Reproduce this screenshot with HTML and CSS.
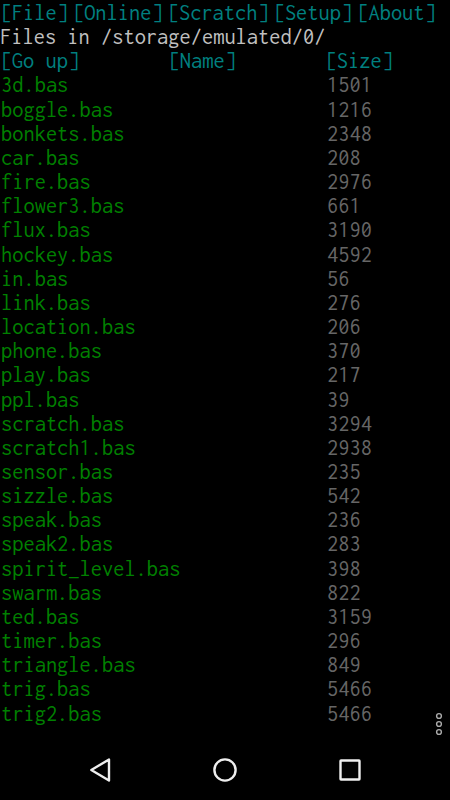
FILE: index.html
```
<!DOCTYPE html>
<html>
  <head>
    <meta charset="utf-8" />
    <title>Files</title>
    <link rel="stylesheet" href="styles.css">
  </head>
  <body>
    <div class="console">
      <div class="menu">
        <a>[File]</a>
        <a>[Online]</a>
        <a>[Scratch]</a>
        <a>[Setup]</a>
        <a>[About]</a>
      </div>
      <p class="path">Files in /storage/emulated/0/</p>
      <div class="header">
        <a>[Go up]</a>
        <a>[Name]</a>
        <a>[Size]</a>
      </div>
      <div class="files" id="files"></div>
    </div>

    <svg class="more" width="10" height="26" viewBox="0 0 10 26">
      <circle cx="5" cy="5" r="2.4" />
      <circle cx="5" cy="13" r="2.4" />
      <circle cx="5" cy="21" r="2.4" />
    </svg>

    <div class="navbar">
      <svg width="32" height="32" viewBox="0 0 32 32">
        <path d="M25 5.5V26.5L7.3 16Z" />
      </svg>
      <svg width="32" height="32" viewBox="0 0 32 32">
        <circle cx="16" cy="16" r="10.6" />
      </svg>
      <svg width="32" height="32" viewBox="0 0 32 32">
        <rect x="6.5" y="6.5" width="19" height="19" rx="0.5" />
      </svg>
    </div>

    <script>
      const files = [
        ["3d.bas", 1501],
        ["boggle.bas", 1216],
        ["bonkets.bas", 2348],
        ["car.bas", 208],
        ["fire.bas", 2976],
        ["flower3.bas", 661],
        ["flux.bas", 3190],
        ["hockey.bas", 4592],
        ["in.bas", 56],
        ["link.bas", 276],
        ["location.bas", 206],
        ["phone.bas", 370],
        ["play.bas", 217],
        ["ppl.bas", 39],
        ["scratch.bas", 3294],
        ["scratch1.bas", 2938],
        ["sensor.bas", 235],
        ["sizzle.bas", 542],
        ["speak.bas", 236],
        ["speak2.bas", 283],
        ["spirit_level.bas", 398],
        ["swarm.bas", 822],
        ["ted.bas", 3159],
        ["timer.bas", 296],
        ["triangle.bas", 849],
        ["trig.bas", 5466],
        ["trig2.bas", 5466],
      ];

      document.getElementById("files").innerHTML = files
        .map(
          ([name, size]) => `
        <div class="row">
          <a class="name">${name}</a>
          <span class="size">${size}</span>
        </div>`
        )
        .join("");
    </script>
  </body>
</html>
```
FILE: styles.css
```
body {
  margin: 0;
  height: 800px;
  display: flex;
  flex-direction: column;
  position: relative;
  overflow: hidden;
  background-color: #000;
  color: #c0c0c0;
  font-family: "Inconsolata", "Noto Sans Mono", "DejaVu Sans Mono", monospace;
  font-size: 22.45px;
  line-height: 24.15px;
}

.console {
  flex: 1;
  padding-top: 1px;
}

.menu {
  display: flex;
  gap: 5px;
  padding-left: 0.6px;
  color: #008080;
}

.path {
  margin: 0;
}

.header {
  display: grid;
  grid-template-columns: 168px 157px 1fr;
  padding-left: 0.6px;
  color: #008080;
}

.row {
  display: grid;
  grid-template-columns: 326px 1fr;
  padding-left: 1px;
}

.name {
  color: #008000;
}

.size {
  color: #666;
}

/* overflow button */
.more {
  position: absolute;
  right: 6px;
  top: 711px;
  fill: none;
  stroke: #aaa;
  stroke-width: 1.4;
}

/* android buttons */
.navbar {
  height: 60px;
  display: flex;
  justify-content: center;
  align-items: center;
  gap: 93px;
}

.navbar svg {
  fill: none;
  stroke: #eee;
  stroke-width: 2.4;
  stroke-linejoin: round;
}
```
